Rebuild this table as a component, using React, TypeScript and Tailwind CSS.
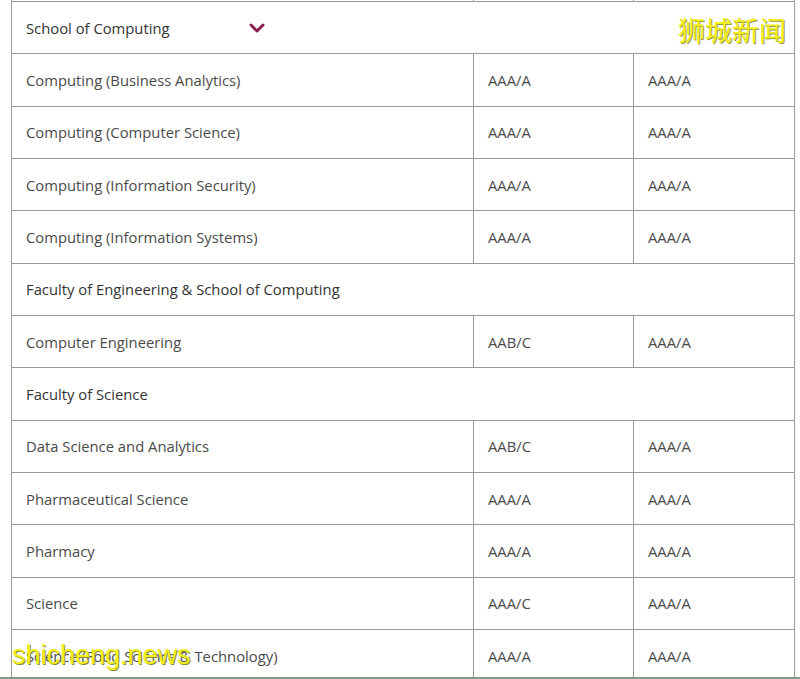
import React from "react";

type Row =
  | { kind: "group"; label: string; chevron?: boolean }
  | { kind: "course"; label: string; a: string; b: string };

const rows: Row[] = [
  { kind: "group", label: "School of Computing", chevron: true },
  { kind: "course", label: "Computing (Business Analytics)", a: "AAA/A", b: "AAA/A" },
  { kind: "course", label: "Computing (Computer Science)", a: "AAA/A", b: "AAA/A" },
  { kind: "course", label: "Computing (Information Security)", a: "AAA/A", b: "AAA/A" },
  { kind: "course", label: "Computing (Information Systems)", a: "AAA/A", b: "AAA/A" },
  { kind: "group", label: "Faculty of Engineering & School of Computing" },
  { kind: "course", label: "Computer Engineering", a: "AAB/C", b: "AAA/A" },
  { kind: "group", label: "Faculty of Science" },
  { kind: "course", label: "Data Science and Analytics", a: "AAB/C", b: "AAA/A" },
  { kind: "course", label: "Pharmaceutical Science", a: "AAA/A", b: "AAA/A" },
  { kind: "course", label: "Pharmacy", a: "AAA/A", b: "AAA/A" },
  { kind: "course", label: "Science", a: "AAA/C", b: "AAA/A" },
  { kind: "course", label: "Science (Food Science & Technology)", a: "AAA/A", b: "AAA/A" },
];

function Chevron() {
  return (
    <svg width="16" height="10" viewBox="0 0 16 10" className="ml-[79px]">
      <path d="M2 2 L8 8 L14 2" fill="none" stroke="#8b1f4e" strokeWidth="3" strokeLinecap="round" strokeLinejoin="round" />
    </svg>
  );
}

export default function App() {
  return (
    <div className="relative h-[679px] w-[800px] overflow-hidden bg-white font-['Open_Sans',sans-serif] text-[14.8px]">
      <div className="ml-[11px] w-[784px] border-x border-[#9a9a9a]">
        <div className="grid h-[1px] grid-cols-[461px_160px_1fr]">
          <div />
          <div className="border-l border-[#9a9a9a]" />
          <div className="border-l border-[#9a9a9a]" />
        </div>
        {rows.map((row, i) =>
          row.kind === "group" ? (
            <div key={i} className="flex h-[52.33px] items-center border-t border-[#9a9a9a] px-[14px] text-[#333]">
              <span>{row.label}</span>
              {row.chevron ? <Chevron /> : null}
            </div>
          ) : (
            <div key={i} className="grid h-[52.33px] grid-cols-[461px_160px_1fr] border-t border-[#9a9a9a] text-[#4a4a4a]">
              <div className="flex items-center px-[14px]">{row.label}</div>
              <div className="flex items-center border-l border-[#9a9a9a] px-[14px]">{row.a}</div>
              <div className="flex items-center border-l border-[#9a9a9a] px-[14px]">{row.b}</div>
            </div>
          )
        )}
      </div>
      <div className="absolute bottom-0 left-0 h-[2px] w-full bg-[#7d9a8a]" />
      <div className="absolute right-[14px] top-[16px] font-['Noto_Sans_CJK_SC',sans-serif] text-[27px] leading-none text-[#f2ee1a] [text-shadow:1px_1px_0_#9a9a40]">
        狮城新闻
      </div>
      <div className="absolute left-[12px] top-[642px] font-['Liberation_Sans',sans-serif] text-[27px] leading-none text-[#f2ee1a] [text-shadow:1px_1px_0_#8a8a30]">
        shicheng.news
      </div>
    </div>
  );
}
